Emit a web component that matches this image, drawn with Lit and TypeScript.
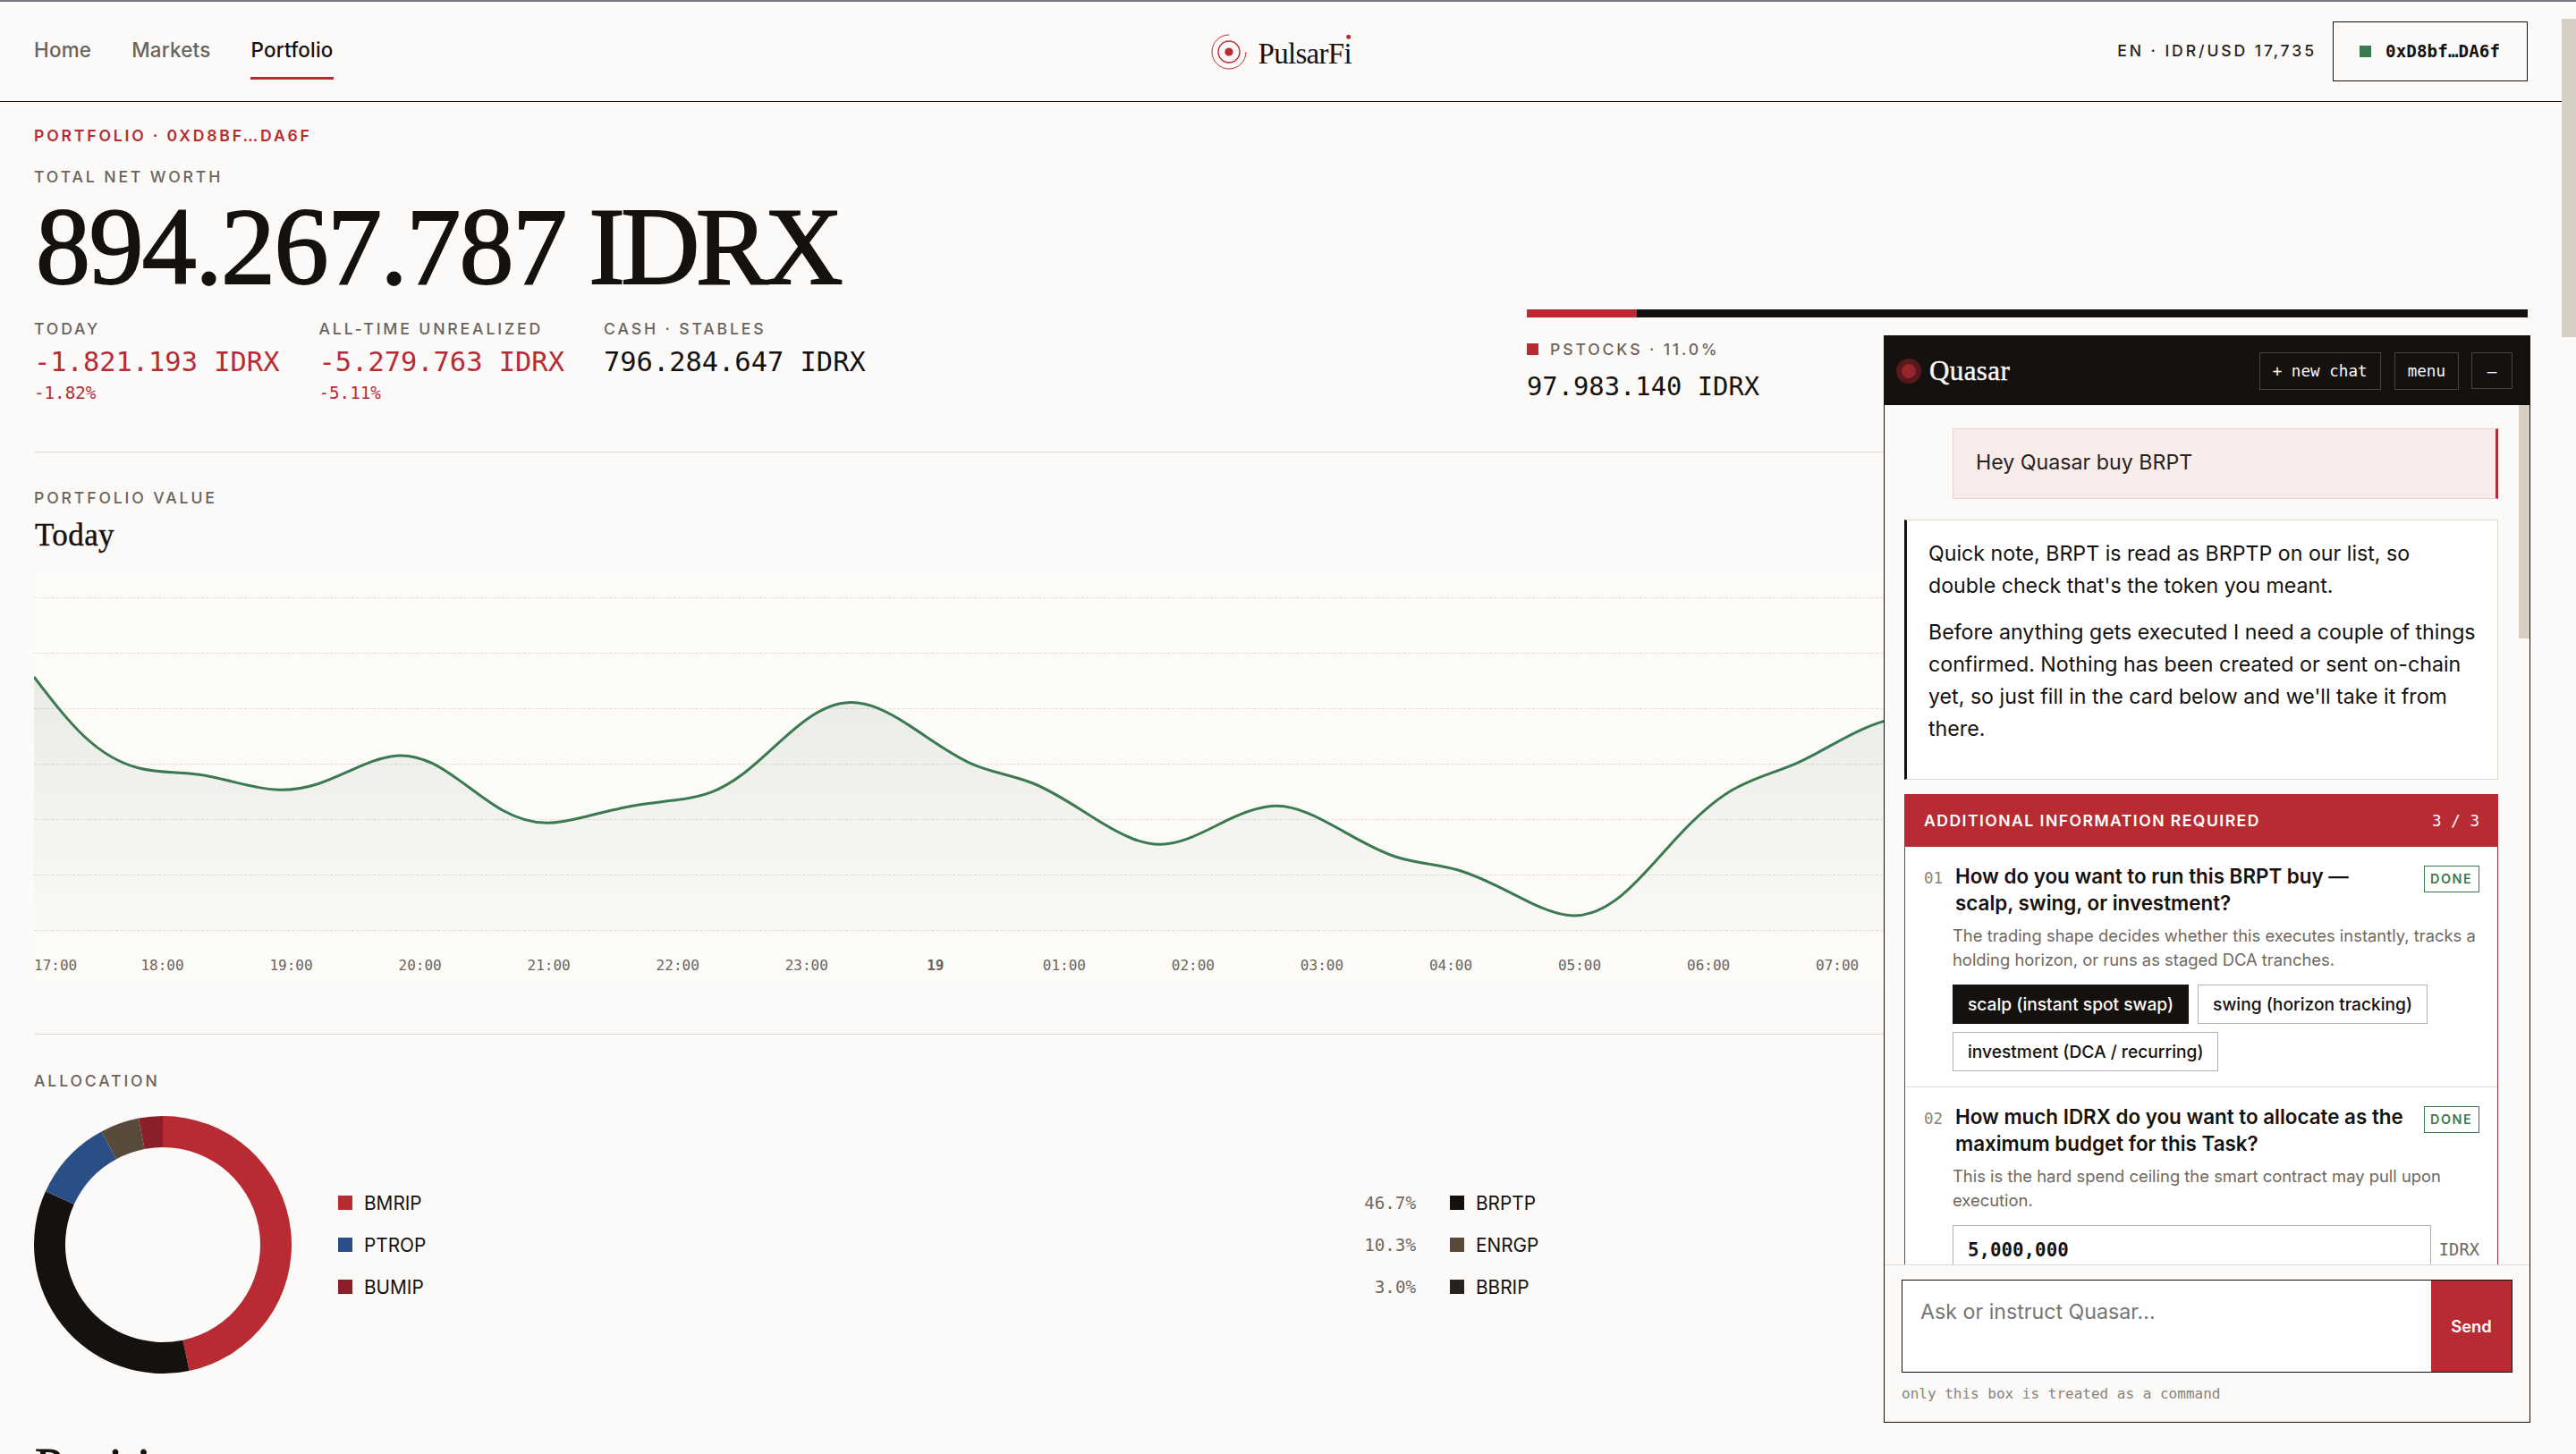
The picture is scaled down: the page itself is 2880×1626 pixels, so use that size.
import { LitElement, html, svg, css } from 'lit';
import { customElement, property } from 'lit/decorators.js';
import { classMap } from 'lit/directives/class-map.js';
import { styleMap } from 'lit/directives/style-map.js';

type Point = [number, number];

const SERIES: Point[] = [
  [38, 757], [94.7, 824], [155.5, 859], [223, 866.3], [313, 883.2], [355, 876.7],
  [405.7, 855.6], [445, 845], [483.4, 853.7], [561.2, 905.7], [612, 920.3],
  [652.5, 913.8], [710, 900.8], [757, 894.6], [794.5, 886.2], [831.6, 864.8],
  [902.6, 804], [950.6, 785.6], [1014.2, 809.7], [1086.7, 854.3], [1155, 876],
  [1233.3, 921], [1297.3, 944.3], [1373.3, 916.7], [1427.7, 901.3], [1496.7, 926.7],
  [1560, 958], [1630.2, 973], [1710.8, 1009.3], [1759.2, 1024], [1812.5, 1001.7],
  [1875.7, 935.7], [1935.3, 884.3], [2009, 853.3], [2082.6, 815.3], [2150, 795]
];

const HOURS = ['18:00', '19:00', '20:00', '21:00', '22:00', '23:00', '19', '01:00',
  '02:00', '03:00', '04:00', '05:00', '06:00', '07:00'];

const HOLDINGS = [
  { name: 'BMRIP', share: 46.7, color: '#b82b33' },
  { name: 'BRPTP', share: 35.1, color: '#15110e' },
  { name: 'PTROP', share: 10.3, color: '#294f86' },
  { name: 'ENRGP', share: 4.9, color: '#584a3a' },
  { name: 'BUMIP', share: 3.0, color: '#8b1f29' },
  { name: 'BBRIP', share: 0.0, color: '#28221f' }
];

// Natural cubic spline: solve for the slope at each point, then write beziers
function smoothPath(pts: Point[]): string {
  const n = pts.length;
  const c: number[] = [];
  const r: number[] = [];
  for (let i = 0; i < n; i++) {
    const left = i > 0 ? 1 / (pts[i][0] - pts[i - 1][0]) : 0;
    const right = i < n - 1 ? 1 / (pts[i + 1][0] - pts[i][0]) : 0;
    const diag = 2 * (left + right);
    let rhs = 0;
    if (i > 0) rhs += 3 * (pts[i][1] - pts[i - 1][1]) * left * left;
    if (i < n - 1) rhs += 3 * (pts[i + 1][1] - pts[i][1]) * right * right;
    const div = i > 0 ? diag - left * c[i - 1] : diag;
    c.push(right / div);
    r.push((rhs - (i > 0 ? left * r[i - 1] : 0)) / div);
  }
  const slope = [...r];
  for (let i = n - 2; i >= 0; i--) {
    slope[i] = r[i] - c[i] * slope[i + 1];
  }
  let d = `M${pts[0][0]},${pts[0][1]}`;
  for (let i = 0; i < n - 1; i++) {
    const [x1, y1] = pts[i];
    const [x2, y2] = pts[i + 1];
    const h = (x2 - x1) / 3;
    d += `C${x1 + h},${y1 + slope[i] * h} ${x2 - h},${y2 - slope[i + 1] * h} ${x2},${y2}`;
  }
  return d;
}

@customElement('value-chart')
export class ValueChart extends LitElement {
  static styles = css`
    :host {
      display: block;
      background: #fcfbf8;
    }
    svg {
      display: block;
      width: 100%;
      height: 460px;
    }
    .grid {
      stroke: #e2dfd4;
      stroke-width: 1;
      stroke-dasharray: 3 1.8;
    }
    .line {
      fill: none;
      stroke: #3b7a51;
      stroke-width: 3;
    }
    .tick {
      font-family: 'DejaVu Sans Mono', monospace;
      font-size: 16px;
      fill: #6b645c;
    }
    .day {
      font-weight: 700;
    }
  `;

  render() {
    const line = smoothPath(SERIES);
    const rows = [668.5, 730.5, 792.5, 854.5, 916.5, 978.5, 1040.5];
    return html`
      <svg viewBox="38 640 2788 460" preserveAspectRatio="none">
        <defs>
          <linearGradient id="fade" gradientUnits="userSpaceOnUse" x1="0" y1="757" x2="0" y2="1046">
            <stop offset="0" stop-color="#33604c" stop-opacity="0.1" />
            <stop offset="1" stop-color="#5a5a50" stop-opacity="0.01" />
          </linearGradient>
        </defs>
        ${rows.map((y) => svg`<line class="grid" x1="38" x2="2826" y1=${y} y2=${y} />`)}
        <path d="${line}V1044H38Z" fill="url(#fade)" />
        <path class="line" d=${line} />
        <text class="tick" x="38" y="1085">17:00</text>
        ${HOURS.map((h, i) => svg`
          <text class="tick ${h.length === 2 ? 'day' : ''}" text-anchor="middle"
            x=${181.5 + i * 144.05} y="1085">${h}</text>`)}
      </svg>
    `;
  }
}

@customElement('allocation-donut')
export class AllocationDonut extends LitElement {
  static styles = css`
    :host {
      display: block;
      width: 288px;
      height: 288px;
      flex: none;
    }
    svg {
      display: block;
    }
  `;

  slice(from: number, to: number, color: string) {
    const at = (pct: number, r: number) => {
      const a = (pct / 100) * Math.PI * 2;
      return `${144 + r * Math.sin(a)},${144 - r * Math.cos(a)}`;
    };
    const large = to - from > 50 ? 1 : 0;
    return svg`<path fill=${color} d="M${at(from, 144)}A144,144 0 ${large} 1 ${at(to, 144)}L${at(to, 109)}A109,109 0 ${large} 0 ${at(from, 109)}Z" />`;
  }

  render() {
    let sum = 0;
    return html`
      <svg width="288" height="288" viewBox="0 0 288 288">
        ${HOLDINGS.filter((h) => h.share > 0).map((h) => {
          const from = sum;
          sum = Math.min(100, sum + h.share);
          return this.slice(from, sum, h.color);
        })}
      </svg>
    `;
  }
}

@customElement('quasar-question')
export class QuasarQuestion extends LitElement {
  @property() number = '';
  @property() question = '';
  @property() hint = '';

  static styles = css`
    :host {
      display: block;
      padding: 18px 20px 17px 21px;
      border-bottom: 1px solid #dfdcd2;
    }
    .head {
      display: flex;
      align-items: flex-start;
    }
    .number {
      width: 35px;
      flex: none;
      font: 17.6px/35px 'DejaVu Sans Mono', monospace;
      color: #8a8378;
    }
    .title {
      flex: 1;
      margin: 0;
      font-size: 22.4px;
      font-weight: 600;
      line-height: 30px;
      white-space: pre-line;
    }
    .done {
      box-sizing: border-box;
      width: 62px;
      height: 30px;
      margin-top: 3px;
      border: 1px solid #3b7a51;
      color: #3b7a51;
      font-size: 14.4px;
      font-weight: 600;
      line-height: 28px;
      letter-spacing: 1.5px;
      padding-left: 6px;
      background: #fff;
    }
    .hint {
      margin: 8px 0 0 32px;
      font-size: 18.4px;
      line-height: 27px;
      color: #6f6860;
      white-space: pre-line;
    }
    .answer {
      margin: 14px 0 0 32px;
    }
  `;

  render() {
    return html`
      <div class="head">
        <span class="number">${this.number}</span>
        <h4 class="title">${this.question}</h4>
        <span class="done">DONE</span>
      </div>
      <p class="hint">${this.hint}</p>
      <div class="answer"><slot></slot></div>
    `;
  }
}

@customElement('quasar-panel')
export class QuasarPanel extends LitElement {
  static styles = css`
    :host {
      display: flex;
      flex-direction: column;
      box-sizing: border-box;
      width: 723px;
      height: 1216px;
      border: 1px solid #15110e;
      background: #fbfaf8;
      color: #15110e;
    }
    .bar {
      display: flex;
      align-items: center;
      height: 77px;
      flex: none;
      padding: 0 19px 0 13px;
      background: #15110e;
      color: #fbfaf8;
    }
    .orb {
      width: 16px;
      height: 16px;
      border: 6px solid #5a181c;
      border-radius: 50%;
      background: #96252c;
    }
    .name {
      flex: 1;
      margin-left: 9px;
      font: 31px/40px 'Liberation Serif', serif;
      letter-spacing: 0.4px;
      -webkit-text-stroke: 0.4px #fbfaf8;
    }
    .tool {
      box-sizing: border-box;
      height: 42px;
      margin-left: 15px;
      border: 1px solid #4a4440;
      padding: 0 14px;
      background: none;
      color: #fbfaf8;
      font: 17.6px/40px 'DejaVu Sans Mono', monospace;
      white-space: pre;
    }
    .tool.small {
      width: 46px;
      height: 41px;
      margin-left: 14px;
      padding: 0;
      text-align: center;
    }
    .body {
      position: relative;
      flex: 1;
      overflow: hidden;
      padding: 26px 35px 0 22px;
    }
    .thumb {
      position: absolute;
      top: 0;
      right: 0;
      width: 12px;
      height: 261px;
      background: #d6cec2;
    }
    .bubble {
      border: 1px solid #e0dbd0;
      font-size: 23.2px;
      line-height: 36px;
    }
    .user {
      margin-left: 54px;
      border-color: #edd0ce;
      border-right: 3px solid #b82b33;
      padding: 19px 24px 22px 25px;
      background: #f8eceb;
      color: #28221f;
    }
    .agent {
      margin-top: 23px;
      border-left: 3px solid #15110e;
      padding: 19px 16px 22px 24px;
      background: #fff;
      white-space: pre-line;
    }
    .agent p {
      margin: 0 0 16px;
    }
    .card {
      margin-top: 16px;
      border: 1px solid #b82b33;
      background: #fff;
    }
    .card-head {
      display: flex;
      justify-content: space-between;
      padding: 0 20px 0 21px;
      background: #b82b33;
      color: #fff;
      font-size: 17.6px;
      font-weight: 600;
      line-height: 58px;
      letter-spacing: 1.45px;
    }
    .count {
      font: 17.6px/58px 'DejaVu Sans Mono', monospace;
      letter-spacing: 0;
    }
    .chips {
      display: flex;
      flex-wrap: wrap;
      gap: 9px 10px;
    }
    .chip {
      box-sizing: border-box;
      height: 44px;
      border: 1px solid #b8afa3;
      padding: 0 16px;
      font-size: 19.2px;
      font-weight: 500;
      line-height: 42px;
    }
    .chip.on {
      border-color: #15110e;
      background: #15110e;
      color: #fbfaf8;
    }
    .amount {
      display: flex;
      align-items: center;
      justify-content: space-between;
    }
    .amount-box {
      box-sizing: border-box;
      width: 535px;
      height: 55px;
      border: 1px solid #b8afa3;
      padding-left: 16px;
      font: 700 20.8px/54px 'DejaVu Sans Mono', monospace;
    }
    .unit {
      font: 18.8px 'DejaVu Sans Mono', monospace;
      color: #6f6860;
    }
    .foot {
      flex: none;
      box-sizing: border-box;
      height: 176px;
      border-top: 1px solid #dfdcd2;
      padding: 16px 19px 0;
    }
    .composer {
      display: flex;
      box-sizing: border-box;
      height: 104px;
      border: 1px solid #15110e;
      background: #fff;
    }
    .prompt {
      flex: 1;
      padding: 17px 20px;
      font-size: 23.2px;
      line-height: 36px;
      color: #757575;
    }
    .send {
      width: 90px;
      background: #b82b33;
      color: #fff;
      font-size: 18.4px;
      font-weight: 600;
      line-height: 102px;
      text-align: center;
    }
    .note {
      margin-top: 12px;
      font: 16px/24px 'DejaVu Sans Mono', monospace;
      color: #8a8378;
    }
  `;

  render() {
    return html`
      <div class="bar">
        <span class="orb"></span>
        <span class="name">Quasar</span>
        <span class="tool">+ new chat</span>
        <span class="tool">menu</span>
        <span class="tool small">–</span>
      </div>
      <div class="body">
        <div class="thumb"></div>
        <div class="bubble user">Hey Quasar buy BRPT</div>
        <div class="bubble agent"><p>Quick note, BRPT is read as BRPTP on our list, so
double check that's the token you meant.</p><p>Before anything gets executed I need a couple of things
confirmed. Nothing has been created or sent on-chain
yet, so just fill in the card below and we'll take it from
there.</p></div>
        <div class="card">
          <div class="card-head">
            <span>ADDITIONAL INFORMATION REQUIRED</span>
            <span class="count">3 / 3</span>
          </div>
          <quasar-question
            number="01"
            .question=${'How do you want to run this BRPT buy —\nscalp, swing, or investment?'}
            .hint=${'The trading shape decides whether this executes instantly, tracks a\nholding horizon, or runs as staged DCA tranches.'}
          >
            <div class="chips">
              ${['scalp (instant spot swap)', 'swing (horizon tracking)', 'investment (DCA / recurring)'].map(
                (label, i) => html`<span class=${classMap({ chip: true, on: i === 0 })}>${label}</span>`
              )}
            </div>
          </quasar-question>
          <quasar-question
            number="02"
            .question=${'How much IDRX do you want to allocate as the\nmaximum budget for this Task?'}
            .hint=${'This is the hard spend ceiling the smart contract may pull upon\nexecution.'}
          >
            <div class="amount">
              <span class="amount-box">5,000,000</span>
              <span class="unit">IDRX</span>
            </div>
          </quasar-question>
        </div>
      </div>
      <div class="foot">
        <div class="composer">
          <div class="prompt">Ask or instruct Quasar...</div>
          <div class="send">Send</div>
        </div>
        <div class="note">only this box is treated as a command</div>
      </div>
    `;
  }
}

@customElement('app-root')
export class AppRoot extends LitElement {
  static styles = css`
    :host {
      display: block;
      position: relative;
      box-sizing: border-box;
      width: 2880px;
      height: 1626px;
      overflow: hidden;
      border-top: 2px solid #787880;
      background: #fbfaf8;
      color: #15110e;
      font-family: Inter, sans-serif;
    }
    .page-thumb {
      position: absolute;
      top: 19px;
      right: 0;
      width: 16px;
      height: 356px;
      background: #d6cec2;
    }
    .panel {
      position: absolute;
      top: 373px;
      left: 2106px;
    }
    header {
      display: grid;
      grid-template-columns: 1fr auto 1fr;
      align-items: center;
      box-sizing: border-box;
      height: 112px;
      margin-right: 16px;
      padding: 0 38px;
      border-bottom: 1px solid #15110e;
    }
    nav {
      display: flex;
      gap: 45px;
      font-size: 22.4px;
      font-weight: 500;
      line-height: 60px;
      letter-spacing: 0.22px;
      color: #6b645c;
    }
    .link {
      border-bottom: 3px solid transparent;
    }
    .link.active {
      border-color: #b82b33;
      color: #15110e;
    }
    .logo {
      display: block;
      width: 160px;
      height: 44px;
    }
    .logo text {
      font-family: 'Liberation Serif', serif;
      font-size: 33px;
      letter-spacing: -0.7px;
      fill: #15110e;
    }
    .account {
      display: flex;
      justify-content: flex-end;
      align-items: center;
      gap: 18px;
    }
    .locale {
      margin-top: -2px;
      font-size: 17.6px;
      font-weight: 500;
      letter-spacing: 2.9px;
      color: #28221f;
    }
    .wallet {
      display: flex;
      align-items: center;
      gap: 16px;
      box-sizing: border-box;
      width: 218px;
      height: 67px;
      border: 1px solid #15110e;
      padding-left: 29px;
      font: 700 19.2px 'DejaVu Sans Mono', monospace;
      letter-spacing: 0.1px;
    }
    .dot {
      width: 13px;
      height: 13px;
      background: #3b7a51;
    }
    main {
      padding: 26px 54px 0 38px;
    }
    .label {
      font-size: 17.6px;
      font-weight: 500;
      line-height: 23px;
      letter-spacing: 2.87px;
      color: #6b645c;
      text-transform: uppercase;
    }
    .label.eyebrow {
      font-weight: 600;
      letter-spacing: 2.82px;
      color: #b82b33;
    }
    .hero {
      display: grid;
      grid-template-columns: 1fr 1119px;
      align-items: end;
      border-bottom: 1px solid #dfdcd2;
      padding: 23px 0 53px;
    }
    h1 {
      margin: 6px 0 0 2px;
      font: 122px/121px 'Liberation Serif', serif;
      letter-spacing: -1.6px;
      word-spacing: -3px;
      -webkit-text-stroke: 1.8px #15110e;
    }
    .currency {
      letter-spacing: -4.6px;
    }
    .stats {
      display: flex;
      margin-top: 20px;
    }
    .stat {
      width: 318.5px;
    }
    .value {
      margin-top: 6px;
      font: 30.4px/40px 'DejaVu Sans Mono', monospace;
    }
    .delta {
      margin-top: 3px;
      height: 24px;
      font: 19.2px/24px 'DejaVu Sans Mono', monospace;
    }
    .down {
      color: #b82b33;
    }
    .split {
      display: flex;
      height: 9px;
      background: #15110e;
    }
    .split-fill {
      background: #b82b33;
    }
    .split-legend {
      display: grid;
      grid-template-columns: 1fr 1fr;
      margin-top: 24px;
    }
    .split-legend .label {
      display: flex;
      align-items: center;
      gap: 13px;
    }
    .swatch {
      width: 13px;
      height: 13px;
      background: #b82b33;
    }
    .swatch.dark {
      background: #15110e;
    }
    .split-legend .value {
      margin-top: 11px;
      font-size: 28.8px;
      line-height: 39px;
    }
    .chart {
      border-bottom: 1px solid #dfdcd2;
      padding: 39px 0 56px;
    }
    h2 {
      margin: 9px 0 19px 1px;
      font: 35px/44px 'Liberation Serif', serif;
      letter-spacing: 0.4px;
      -webkit-text-stroke: 0.4px #15110e;
    }
    .allocation {
      padding-top: 40px;
    }
    .breakdown {
      display: flex;
      align-items: center;
      gap: 52px;
      margin-top: 28px;
    }
    .legend {
      flex: 1;
      display: grid;
      grid-template-columns: 1fr 1fr;
      gap: 22px 38px;
    }
    .holding {
      display: flex;
      align-items: center;
      font-size: 20.8px;
      line-height: 25px;
    }
    .key {
      width: 16px;
      height: 16px;
      margin-right: 13px;
    }
    .share {
      margin-left: auto;
      font: 19.2px/25px 'DejaVu Sans Mono', monospace;
      color: #6f6860;
    }
    .positions {
      margin: 74px 0 0 1px;
      font: 57px/60px 'Liberation Serif', serif;
      -webkit-text-stroke: 0.8px #15110e;
    }
  `;

  render() {
    return html`
      <header>
        <nav>
          <span class="link">Home</span>
          <span class="link">Markets</span>
          <span class="link active">Portfolio</span>
        </nav>
        <svg class="logo" viewBox="0 0 160 44">
          <circle cx="22" cy="22" r="4.6" fill="#b82b33" />
          <circle cx="22" cy="22" r="12" fill="none" stroke="#b82b33" stroke-width="1.4" />
          <path d="M41 22A19 19 0 1 1 22 3" fill="none" stroke="#b82b33" stroke-width="1" />
          <text x="54.5" y="34.5">PulsarFi</text>
          <circle cx="155.7" cy="5.3" r="2.5" fill="#b82b33" />
        </svg>
        <div class="account">
          <span class="locale">EN · IDR/USD 17,735</span>
          <div class="wallet"><span class="dot"></span>0xD8bf…DA6f</div>
        </div>
      </header>
      <main>
        <div class="label eyebrow">Portfolio · 0xD8bf…DA6f</div>
        <section class="hero">
          <div>
            <div class="label">Total net worth</div>
            <h1>894.267.787 <span class="currency">IDRX</span></h1>
            <div class="stats">
              <div class="stat">
                <div class="label">Today</div>
                <div class="value down">-1.821.193 IDRX</div>
                <div class="delta down">-1.82%</div>
              </div>
              <div class="stat">
                <div class="label">All-time unrealized</div>
                <div class="value down">-5.279.763 IDRX</div>
                <div class="delta down">-5.11%</div>
              </div>
              <div class="stat">
                <div class="label">Cash · stables</div>
                <div class="value">796.284.647 IDRX</div>
              </div>
            </div>
          </div>
          <div>
            <div class="split"><div class="split-fill" style=${styleMap({ width: '11%' })}></div></div>
            <div class="split-legend">
              <div>
                <div class="label"><span class="swatch"></span>pStocks · 11.0%</div>
                <div class="value">97.983.140 IDRX</div>
              </div>
              <div>
                <div class="label"><span class="swatch dark"></span>Stables · 89.0%</div>
                <div class="value">796.284.647 IDRX</div>
              </div>
            </div>
          </div>
        </section>
        <section class="chart">
          <div class="label">Portfolio value</div>
          <h2>Today</h2>
          <value-chart></value-chart>
        </section>
        <section class="allocation">
          <div class="label">Allocation</div>
          <div class="breakdown">
            <allocation-donut></allocation-donut>
            <div class="legend">
              ${HOLDINGS.map((h) => html`
                <div class="holding">
                  <span class="key" style=${styleMap({ background: h.color })}></span>
                  ${h.name}
                  <span class="share">${h.share.toFixed(1)}%</span>
                </div>`)}
            </div>
          </div>
        </section>
        <h3 class="positions">Positions</h3>
      </main>
      <div class="page-thumb"></div>
      <quasar-panel class="panel"></quasar-panel>
    `;
  }
}
